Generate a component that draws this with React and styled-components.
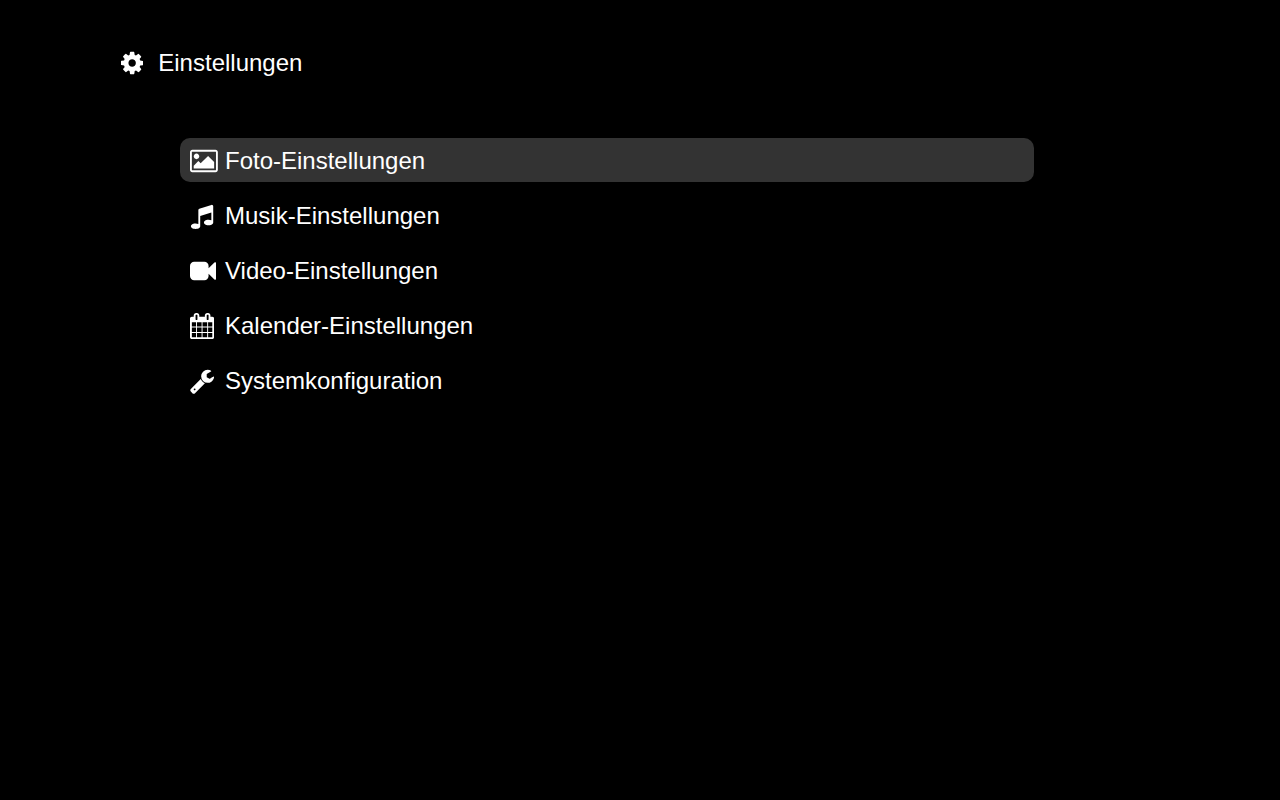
import React, { useState } from 'react';
import styled, { createGlobalStyle } from 'styled-components';

const GlobalStyle = createGlobalStyle`
    * {
        box-sizing: border-box;
    }

    body {
        margin: 0;
        background: #000;
        color: #fff;
        font-family: 'Liberation Sans', Arial, sans-serif;
        font-size: 24px;
        line-height: 30px;
    }
`

const Page = styled.main`
    padding: 48px 246px 48px 121px;
`

const Header = styled.header`
    display: flex;
    align-items: center;
    gap: 15px;

    h1 {
        margin: 0;
        font-size: 24px;
        font-weight: 400;
    }
`

const Menu = styled.nav`
    margin: 60px 0 0 59px;
    display: flex;
    flex-direction: column;
    gap: 11px;
`

const MenuItem = styled.button`
    height: 44px;
    padding: 2px 10px 0;
    display: flex;
    align-items: center;
    gap: 7px;
    background: ${props => props.$selected ? '#333' : 'transparent'};
    border: none;
    border-radius: 10px;
    outline: none;
    color: inherit;
    font: inherit;
    text-align: left;
    cursor: pointer;
`

const IconSlot = styled.span`
    width: 28px;
    flex-shrink: 0;
    display: flex;
`

const Svg = styled.svg`
    height: 26px;
    display: block;
    fill: currentColor;
`

const icons = {
    cog: {
        viewBox: '128 0 1536 1792',
        path: 'M1152 896q0-106-75-181t-181-75-181 75-75 181 75 181 181 75 181-75 75-181zm512-109v222q0 12-8 23t-20 13l-185 28q-19 54-39 91 35 50 107 138 10 12 10 25t-9 23q-27 37-99 108t-94 71q-12 0-26-9l-138-108q-44 23-91 38-16 136-29 186-7 28-36 28h-222q-14 0-24.5-8.5t-11.5-21.5l-28-184q-49-16-90-37l-141 107q-10 9-25 9-14 0-25-11-126-114-165-168-7-10-7-23 0-12 8-23 15-21 51-66.5t54-70.5q-27-50-41-99l-183-27q-13-2-21-12.5t-8-23.5v-222q0-12 8-23t19-13l186-28q14-46 39-92-40-57-107-138-10-12-10-24 0-10 9-23 26-36 98.5-107.5t94.5-71.5q13 0 26 10l138 107q44-23 91-38 16-136 29-186 7-28 36-28h222q14 0 24.5 8.5t11.5 21.5l28 184q49 16 90 37l142-107q9-9 24-9 13 0 25 10 129 119 165 170 7 8 7 22 0 12-8 23-15 21-51 66.5t-54 70.5q26 50 41 98l183 28q13 2 21 12.5t8 23.5z'
    },
    picture: {
        viewBox: '64 0 1920 1792',
        path: 'M704 576q0 80-56 136t-136 56-136-56-56-136 56-136 136-56 136 56 56 136zm1024 384v448h-1408v-192l320-320 160 160 512-512zm96-704h-1600q-13 0-22.5 9.5t-9.5 22.5v1216q0 13 9.5 22.5t22.5 9.5h1600q13 0 22.5-9.5t9.5-22.5v-1216q0-13-9.5-22.5t-22.5-9.5zm160 32v1216q0 66-47 113t-113 47h-1600q-66 0-113-47t-47-113v-1216q0-66 47-113t113-47h1600q66 0 113 47t47 113z'
    },
    music: {
        viewBox: '64 0 1664 1792',
        path: 'M1664 224v1120q0 50-34 89t-86 60.5-103.5 32-96.5 10.5-96.5-10.5-103.5-32-86-60.5-34-89 34-89 86-60.5 103.5-32 96.5-10.5q105 0 192 39v-537l-768 237v709q0 50-34 89t-86 60.5-103.5 32-96.5 10.5-96.5-10.5-103.5-32-86-60.5-34-89 34-89 86-60.5 103.5-32 96.5-10.5q105 0 192 39v-967q0-31 19-56.5t49-35.5l832-256q12-4 28-4 40 0 68 28t28 68z'
    },
    video: {
        viewBox: '0 0 1792 1792',
        path: 'M1792 352v1088q0 42-39 59-13 5-25 5-27 0-45-19l-403-403v166q0 119-84.5 203.5t-203.5 84.5h-704q-119 0-203.5-84.5t-84.5-203.5v-704q0-119 84.5-203.5t203.5-84.5h704q119 0 203.5 84.5t84.5 203.5v165l403-402q18-19 45-19 12 0 25 5 39 17 39 59z'
    },
    calendar: {
        viewBox: '64 0 1664 1792',
        path: 'M192 1664h288v-288h-288v288zm352 0h320v-288h-320v288zm-352-352h288v-320h-288v320zm352 0h320v-320h-320v320zm-352-384h288v-288h-288v288zm736 736h320v-288h-320v288zm-384-736h320v-288h-320v288zm768 736h288v-288h-288v288zm-384-352h320v-320h-320v320zm-352-864v-288q0-13-9.5-22.5t-22.5-9.5h-64q-13 0-22.5 9.5t-9.5 22.5v288q0 13 9.5 22.5t22.5 9.5h64q13 0 22.5-9.5t9.5-22.5zm736 864h288v-320h-288v320zm-384-384h320v-288h-320v288zm384 0h288v-288h-288v288zm32-480v-288q0-13-9.5-22.5t-22.5-9.5h-64q-13 0-22.5 9.5t-9.5 22.5v288q0 13 9.5 22.5t22.5 9.5h64q13 0 22.5-9.5t9.5-22.5zm384-64v1280q0 52-38 90t-90 38h-1408q-52 0-90-38t-38-90v-1280q0-52 38-90t90-38h128v-96q0-66 47-113t113-47h64q66 0 113 47t47 113v96h384v-96q0-66 47-113t113-47h64q66 0 113 47t47 113v96h128q52 0 90 38t38 90z'
    },
    wrench: {
        viewBox: '64 0 1664 1792',
        path: 'M448 1472q0-26-19-45t-45-19-45 19-19 45 19 45 45 19 45-19 19-45zm644-420l-682 682q-37 37-90 37-52 0-91-37l-106-108q-38-36-38-90 0-53 38-91l681-681q39 98 114.5 173.5t173.5 114.5zm634-435q0 39-23 106-47 134-164.5 217.5t-258.5 83.5q-185 0-316.5-131.5t-131.5-316.5 131.5-316.5 316.5-131.5q58 0 121.5 16.5t107.5 46.5q16 11 16 28t-16 28l-293 169v224l193 107q5-3 79-48.5t135.5-81 70.5-35.5q15 0 23.5 10t8.5 25z'
    }
}

const items = [
    { icon: 'picture', label: 'Foto-Einstellungen' },
    { icon: 'music', label: 'Musik-Einstellungen' },
    { icon: 'video', label: 'Video-Einstellungen' },
    { icon: 'calendar', label: 'Kalender-Einstellungen' },
    { icon: 'wrench', label: 'Systemkonfiguration' }
]

const Icon = props => (
    <Svg viewBox={icons[props.name].viewBox} aria-hidden='true'>
        <path d={icons[props.name].path} />
    </Svg>
)

const App = () => {
    const [selected, setSelected] = useState(0);

    return (
        <Page>
            <GlobalStyle />
            <Header>
                <Icon name='cog' />
                <h1>Einstellungen</h1>
            </Header>
            <Menu>
                {items.map((item, index) => (
                    <MenuItem
                        key={item.label}
                        type='button'
                        $selected={index === selected}
                        onClick={() => setSelected(index)}
                    >
                        <IconSlot>
                            <Icon name={item.icon} />
                        </IconSlot>
                        {item.label}
                    </MenuItem>
                ))}
            </Menu>
        </Page>
    )
};

export default App;
